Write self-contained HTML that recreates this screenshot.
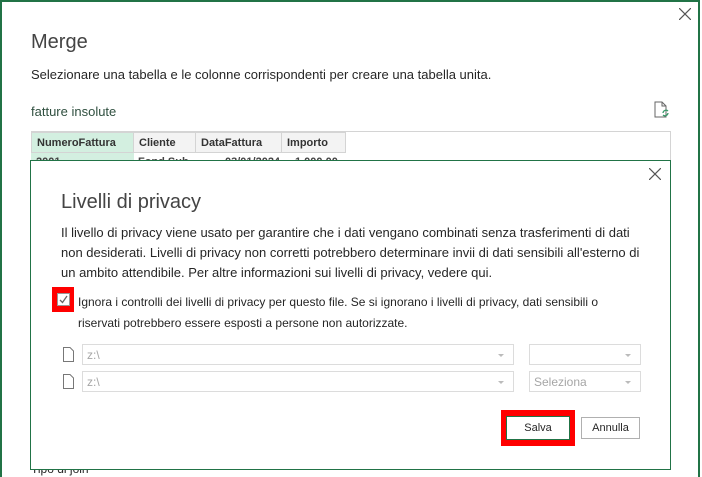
<!DOCTYPE html>
<html><head><meta charset="utf-8"><style>
*{box-sizing:border-box;margin:0;padding:0}
body{width:702px;height:477px;background:#fff;font-family:"Liberation Sans",sans-serif;color:#262626;position:relative;overflow:hidden}
.a{position:absolute}
.outer{left:0;top:0;width:700px;height:477px;border:2px solid #217346;border-bottom:none}
.t{font-size:13px;white-space:nowrap}
.th{top:132px;height:21px;border:1px solid #d4d4d4;background:#f3f3f3;font-size:11px;font-weight:bold;padding:4px 5px;color:#333}
.inner{left:30px;top:160px;width:641px;height:310px;border:1.5px solid #217346;background:#fff}
.dd{height:21px;border:1px solid #dcdcdc;font-size:12px;color:#a6a6a6;padding:3px 4px}
.dd:after{content:"";position:absolute;right:9px;top:9px;border:3px solid transparent;border-top:3px solid #bbb}
.btn{height:22px;border:1px solid #b0b0b0;font-size:11px;text-align:center;line-height:20px;background:#fff}
.td{top:153px;height:10px;font-size:11px;font-weight:bold;color:#444;padding:3px 5px 0}
</style></head><body>
<div class="a outer"></div>
<svg class="a" style="left:679px;top:8px" width="12" height="12"><path d="M0 0L12 12M12 0L0 12" stroke="#555" stroke-width="1.2"/></svg>
<div class="a" style="left:31px;top:31px;font-size:20px;color:#444">Merge</div>
<div class="a t" style="left:31px;top:67px">Selezionare una tabella e le colonne corrispondenti per creare una tabella unita.</div>
<div class="a t" style="left:31px;top:104px;color:#2f4f3f">fatture insolute</div>
<svg class="a" style="left:654px;top:101px" width="16" height="18"><path d="M1 1H8L12 5V16H1Z M8 1V5H12" fill="none" stroke="#666"/><path d="M9 12a3 3 0 0 1 5-2M14 12a3 3 0 0 1-5 2" fill="none" stroke="#3a9a6a" stroke-width="1.3"/></svg>
<div class="a" style="left:31px;top:131px;width:640px;height:30px;border:1px solid #d4d4d4"></div>
<div class="a th" style="left:31px;width:103px;background:#d3efe0">NumeroFattura</div>
<div class="a th" style="left:133px;width:63px">Cliente</div>
<div class="a th" style="left:195px;width:87px">DataFattura</div>
<div class="a th" style="left:281px;width:65px">Importo</div>
<div class="a td" style="left:31px;width:103px;background:#d3efe0">2001</div>
<div class="a td" style="left:133px">Fond.Sub</div>
<div class="a td" style="left:220px">03/01/2024</div>
<div class="a td" style="left:290px">1.000,00</div>
<div class="a t" style="left:31px;top:462px;font-size:12px">Tipo di join</div>
<div class="a inner"></div>
<svg class="a" style="left:649px;top:168px" width="12" height="12"><path d="M0 0L12 12M12 0L0 12" stroke="#555" stroke-width="1.2"/></svg>
<div class="a" style="left:61px;top:191px;font-size:20px;color:#444">Livelli di privacy</div>
<div class="a" style="left:61px;top:223px;font-size:13px;line-height:20px;width:590px">Il livello di privacy viene usato per garantire che i dati vengano combinati senza trasferimenti di dati non desiderati. Livelli di privacy non corretti potrebbero determinare invii di dati sensibili all'esterno di un ambito attendibile. Per altre informazioni sui livelli di privacy, vedere qui.</div>
<div class="a" style="left:52px;top:287px;width:22px;height:25px;background:#f00"></div>
<div class="a" style="left:57px;top:293px;width:13px;height:13px;background:#fff;border:1px solid #999"></div>
<svg class="a" style="left:58px;top:294px" width="11" height="11"><path d="M2 6L4.5 8.5L9 2" fill="none" stroke="#666" stroke-width="1.3"/></svg>
<div class="a" style="left:78px;top:292px;font-size:12px;line-height:21px;width:560px">Ignora i controlli dei livelli di privacy per questo file. Se si ignorano i livelli di privacy, dati sensibili o riservati potrebbero essere esposti a persone non autorizzate.</div>
<svg class="a" style="left:63px;top:347px" width="11" height="15"><path d="M.5 .5H7L10.5 4V14.5H.5Z" fill="none" stroke="#777"/></svg>
<svg class="a" style="left:63px;top:374px" width="11" height="15"><path d="M.5 .5H7L10.5 4V14.5H.5Z" fill="none" stroke="#777"/></svg>
<div class="a dd" style="left:82px;top:344px;width:432px">z:\</div>
<div class="a dd" style="left:82px;top:371px;width:432px">z:\</div>
<div class="a dd" style="left:529px;top:344px;width:112px"></div>
<div class="a dd" style="left:529px;top:371px;width:112px">Seleziona</div>
<div class="a" style="left:501px;top:410px;width:74px;height:36px;background:#f00"></div>
<div class="a btn" style="left:506px;top:416px;width:64px;height:24px;line-height:22px;border-color:#217346">Salva</div>
<div class="a btn" style="left:581px;top:417px;width:59px">Annulla</div>
</body></html>
